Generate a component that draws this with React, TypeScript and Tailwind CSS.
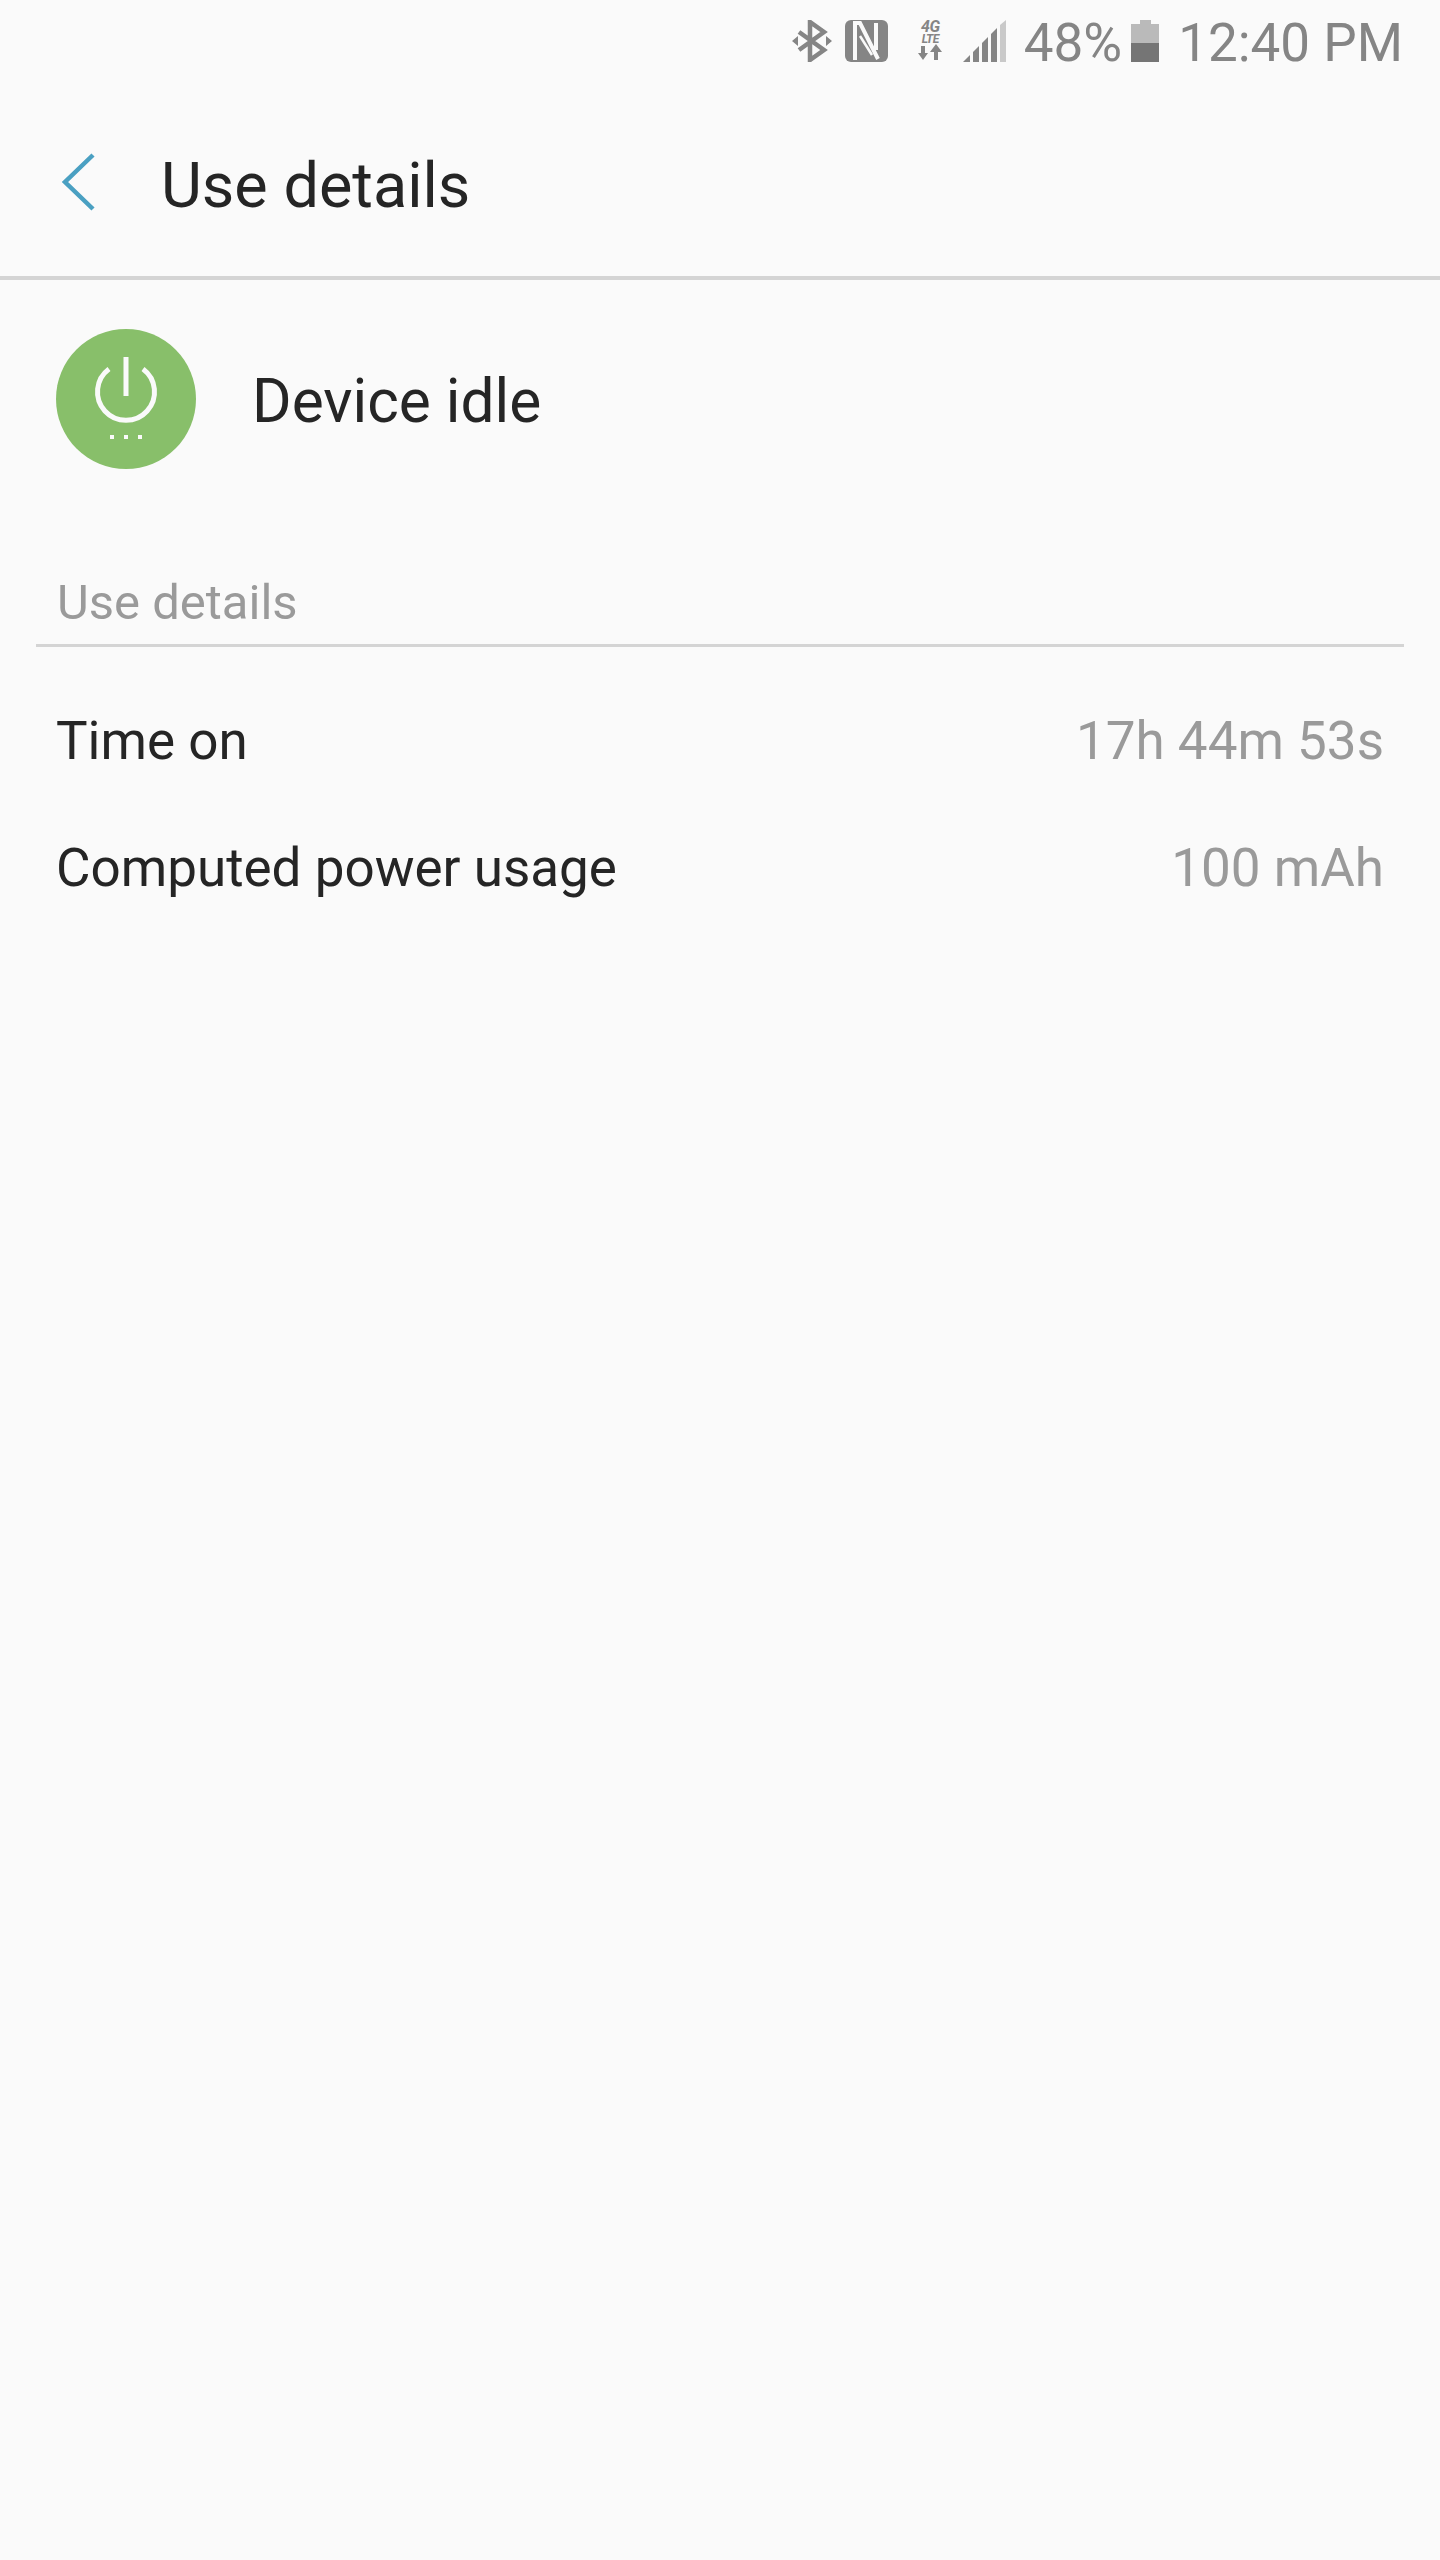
function StatusIcons() {
  return (
    <div className="flex items-center text-[#858585]">
      {/* bluetooth */}
      <svg width="40" height="42" viewBox="0 0 40 42" className="mr-[13px]">
        <path d="M7 12 L32 30 L18 40 V2 L32 12 L7 30" fill="none" stroke="#858585" strokeWidth="4.5" />
        <path d="M0 21 L6 16 V26 Z M40 21 L34 16 V26 Z" fill="#858585" />
      </svg>
      {/* nfc */}
      <svg width="43" height="42" viewBox="0 0 43 42" className="mr-[30px]">
        <rect x="0" y="0" width="43" height="42" rx="6" fill="#858585" />
        <path d="M10 40 V3 H15 L33 39 M31 30 V3" fill="none" stroke="#fafafa" strokeWidth="4" />
        <path d="M15 16 L27 35" fill="none" stroke="#fafafa" strokeWidth="2.5" />
      </svg>
      {/* 4g lte */}
      <div className="mr-[20px] flex h-[42px] w-[25px] flex-col items-center text-[#858585]">
        <span className="text-[16px] font-bold italic leading-[14px] tracking-[-0.5px]">4G</span>
        <span className="text-[12px] font-bold italic leading-[10px] tracking-[-0.5px]">LTE</span>
        <svg width="25" height="18" viewBox="0 0 25 18">
          <path d="M3 2 H7 V9 H10 L5 16 L0 9 H3 Z" fill="#858585" />
          <path d="M16 16 H20 V8 H24 L18 0 L12 8 H16 Z" fill="#858585" />
        </svg>
      </div>
      {/* signal */}
      <svg width="43" height="42" viewBox="0 0 43 42" className="mr-[18px]">
        <path d="M0 42 L7 35 V42 Z" fill="#858585" />
        <path d="M10 32 L16 26 V42 H10 Z" fill="#858585" />
        <path d="M19 23 L25 17 V42 H19 Z" fill="#858585" />
        <path d="M28 14 L34 8 V42 H28 Z" fill="#858585" />
        <path d="M37 5 L43 0 V42 H37 Z" fill="#c9c9c9" />
      </svg>
      <span className="mt-[4px] text-[53px] leading-none">48%</span>
      {/* battery */}
      <div className="ml-[9px] mr-[19px] flex w-[28px] flex-col items-center">
        <div className="h-[4px] w-[11px] bg-[#bababa]" />
        <div className="h-[19px] w-full bg-[#bababa]" />
        <div className="h-[19px] w-full bg-[#757575]" />
      </div>
      <span className="mt-[4px] text-[53px] leading-none">12:40 PM</span>
    </div>
  )
}

function DetailRow({ label, value }: { label: string; value: string }) {
  return (
    <div className="flex h-[127px] items-center justify-between px-[56px]">
      <span className="text-[53px] text-[#252525]">{label}</span>
      <span className="text-[53px] text-[#9a9a9a]">{value}</span>
    </div>
  )
}

export default function App() {
  return (
    <div className="h-[2560px] w-[1440px] bg-[#fafafa] font-['Roboto',sans-serif]">
      <div className="flex h-[82px] items-center justify-end pr-[37px]">
        <StatusIcons />
      </div>

      {/* toolbar */}
      <div className="flex h-[198px] items-center border-b-[4px] border-[#d4d4d4] pt-[13px]">
        <svg width="36" height="60" viewBox="0 0 36 60" className="mb-[7px] ml-[60px]">
          <path d="M33 3 L5 30 L33 57" fill="none" stroke="#4aa0c2" strokeWidth="4.5" />
        </svg>
        <span className="ml-[65px] text-[63px] leading-none text-[#252525]">Use details</span>
      </div>

      {/* app row */}
      <div className="flex items-center pl-[56px] pt-[49px]">
        <div className="h-[140px] w-[140px] rounded-full bg-[#88bf6a]">
          <svg width="140" height="140" viewBox="0 0 140 140">
            <path d="M53 40 A28.5 28.5 0 1 0 87 40" fill="none" stroke="#fafafa" strokeWidth="5" />
            <path d="M70 28 V67" fill="none" stroke="#fafafa" strokeWidth="5" />
            <path d="M54 106 H58 V110 H54 Z M68 106 H72 V110 H68 Z M82 106 H86 V110 H82 Z" fill="#fafafa" />
          </svg>
        </div>
        <span className="ml-[56px] pt-[6px] text-[60.4px] leading-none text-[#252525]">Device idle</span>
      </div>

      {/* section */}
      <div className="mx-[36px] mt-[106px] border-b-[3px] border-[#d4d4d4] pb-[13px] pl-[21px]">
        <span className="block text-[49px] leading-[56px] text-[#9a9a9a]">Use details</span>
      </div>

      <div className="pt-[31px]">
        <DetailRow label="Time on" value="17h 44m 53s" />
        <DetailRow label="Computed power usage" value="100 mAh" />
      </div>
    </div>
  )
}
